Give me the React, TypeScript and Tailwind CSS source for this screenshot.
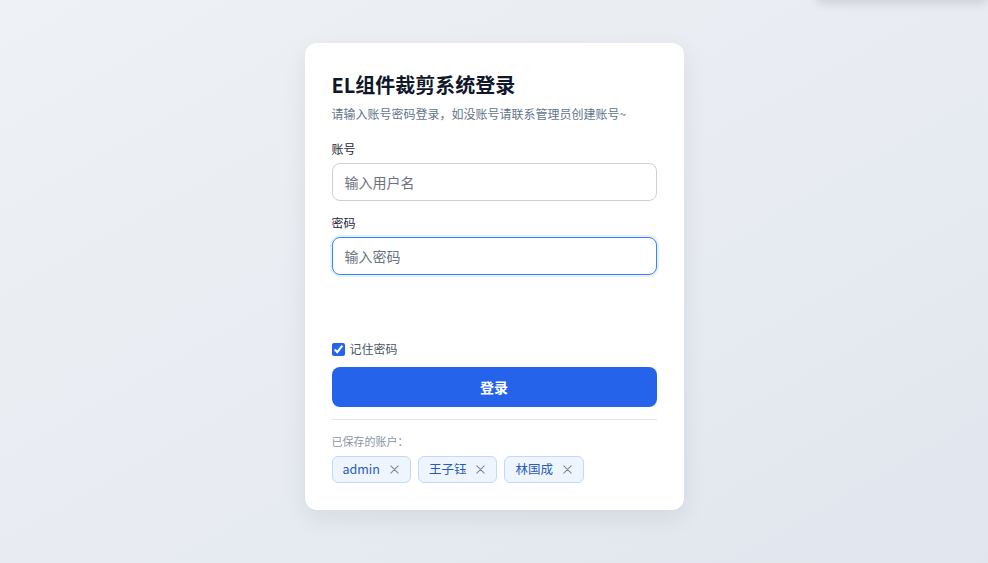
import React from "react";

const font = { fontFamily: '"Noto Sans CJK SC", "Noto Sans", sans-serif' };

function XIcon() {
  return (
    <svg width="11" height="11" viewBox="0 0 12 12" fill="none" stroke="currentColor" strokeWidth="1.1" strokeLinecap="round">
      <path d="M2 2L10 10M10 2L2 10" />
    </svg>
  );
}

function Tag({ label }: { label: string }) {
  return (
    <div className="flex h-[27px] items-center gap-[9px] rounded-[6px] border border-[#c3daf2] bg-[#eef5fe] pl-[10px] pr-[10px] text-[12.5px] text-[#2a5bb8]">
      <span>{label}</span>
      <span className="text-[#7b8797]"><XIcon /></span>
    </div>
  );
}

export default function App() {
  return (
    <div
      className="relative flex min-h-[563px] w-full justify-center overflow-hidden bg-gradient-to-br from-[#eef1f5] via-[#e8ecf2] to-[#e1e6ee] pt-[43px]"
      style={font}
    >
      <div className="absolute right-0 top-[-40px] h-[40px] w-[172px] rounded-b-lg bg-white shadow-[0_4px_10px_rgba(15,23,42,0.12)]" />
      <div className="flex h-[467px] w-[379px] flex-col rounded-[12px] bg-white px-[27px] pt-[28px] shadow-[0_8px_24px_rgba(15,23,42,0.08)]">
        <h1 className="text-[20px] font-bold leading-[28px] text-[#0f172a]">EL组件裁剪系统登录</h1>
        <p className="mt-[7px] text-[12px] leading-[16px] text-[#64748b]">
          请输入账号密码登录，如没账号请联系管理员创建账号~
        </p>
        <label className="mt-[19px] text-[12px] font-normal leading-[16px] text-[#1f2937]">账号</label>
        <div className="mt-[6px] flex h-[38px] items-center rounded-[8px] border border-[#cbd0d8] px-[12px] text-[14px] text-[#6b7280]">
          输入用户名
        </div>
        <label className="mt-[14px] text-[12px] font-normal leading-[16px] text-[#1f2937]">密码</label>
        <div className="mt-[6px] flex h-[38px] items-center rounded-[8px] border border-[#3b82f6] px-[12px] text-[14px] text-[#6b7280] shadow-[0_0_0_2px_rgba(59,130,246,0.12)]">
          输入密码
        </div>
        <div className="h-[66px]" />
        <div className="flex items-center gap-[5px] text-[12px] leading-[16px] text-[#4b5563]">
          <input type="checkbox" checked readOnly className="h-[13px] w-[13px] accent-[#2563eb]" />
          <span>记住密码</span>
        </div>
        <button className="mt-[10px] h-[40px] w-full rounded-[8px] bg-[#2563eb] text-[14px] font-bold text-white">
          登录
        </button>
        <div className="mt-[12px] h-px w-full bg-[#e5e7eb]" />
        <div className="mt-[13px] text-[11px] leading-[16px] text-[#8b95a3]">已保存的账户：</div>
        <div className="mt-[7px] flex gap-[7px]">
          <Tag label="admin" />
          <Tag label="王子钰" />
          <Tag label="林国成" />
        </div>
      </div>
    </div>
  );
}
